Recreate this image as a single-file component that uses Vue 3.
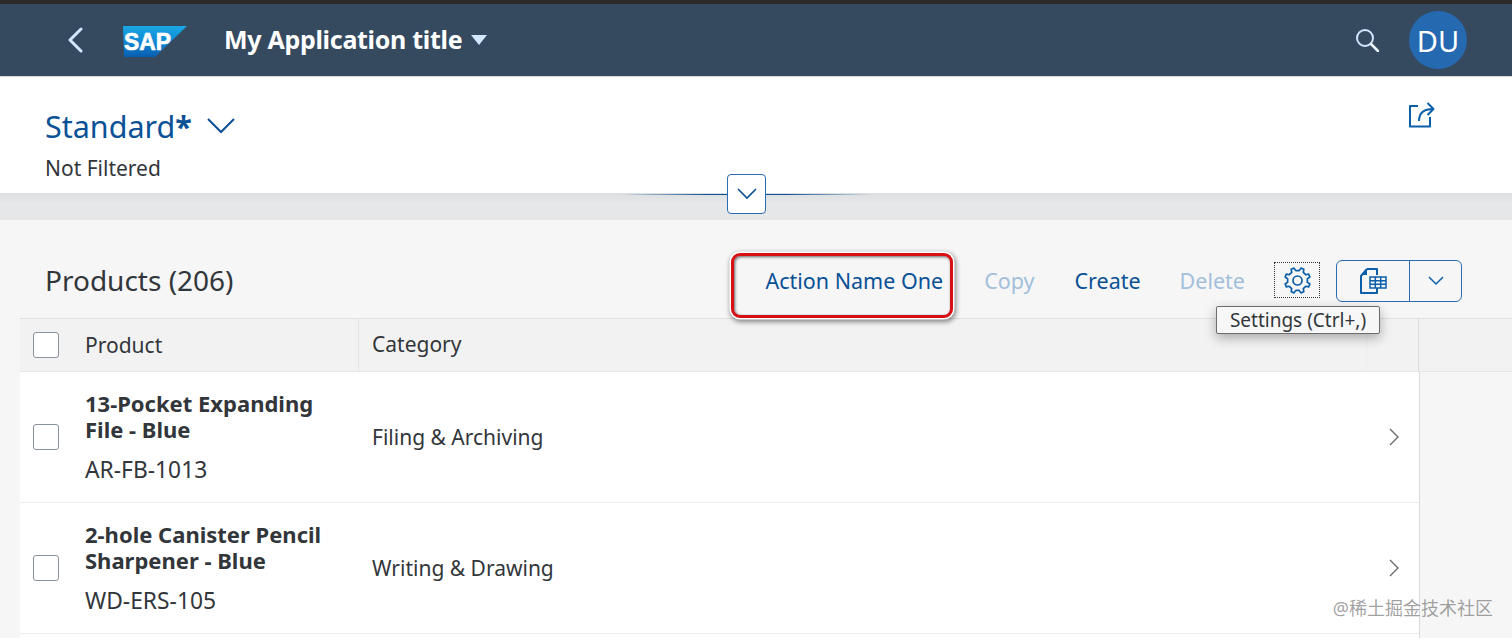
<script setup>
const products = [
    { name: "13-Pocket Expanding File - Blue", code: "AR-FB-1013", category: "Filing & Archiving" },
    { name: "2-hole Canister Pencil Sharpener - Blue", code: "WD-ERS-105", category: "Writing & Drawing" },
];

// outline of the settings gear, 8 teeth round the centre 12,12
function gearPath() {
    const pts = [];
    for (let i = 0; i < 8; i++) {
        const a = (i * Math.PI) / 4;
        [[-0.27, 11.4], [-0.17, 8.9], [0.17, 8.9], [0.27, 11.4]].forEach((p) => {
            pts.push((12 + p[1] * Math.cos(a + p[0])).toFixed(2) + " " + (12 + p[1] * Math.sin(a + p[0])).toFixed(2));
        });
    }
    return "M" + pts.join("L") + "Z";
}
const gear = gearPath();
</script>
<template>
    <div class="page">
        <div class="top_strip"></div>
        <header class="shell">
            <svg class="back" viewBox="0 0 16 26" width="16" height="26">
                <path d="M14 2 3 13l11 11" fill="none" stroke="#d1e8ff" stroke-width="3" stroke-linecap="round" stroke-linejoin="round" />
            </svg>
            <svg class="logo" viewBox="0 0 64 31" width="64" height="31">
                <defs>
                    <linearGradient id="sapBlue" x1="0" y1="0" x2="0" y2="1">
                        <stop offset="0" stop-color="#1aa7e6" />
                        <stop offset="0.55" stop-color="#0f86d2" />
                        <stop offset="1" stop-color="#0a5db0" />
                    </linearGradient>
                </defs>
                <polygon points="0,0 64,0 32,31 1,31" fill="url(#sapBlue)" />
                <text x="1" y="24" class="logo_text" textLength="47" lengthAdjust="spacingAndGlyphs">SAP</text>
            </svg>
            <span class="app_title">My Application title</span>
            <svg class="title_arrow" viewBox="0 0 16 10" width="16" height="10">
                <polygon points="0,0 16,0 8,10" fill="#d1e8ff" />
            </svg>
            <svg class="search" viewBox="0 0 24 24" width="24" height="24">
                <circle cx="10" cy="10" r="8" fill="none" stroke="#d1e8ff" stroke-width="2" />
                <path d="M16 16l7 7" stroke="#e8f3ff" stroke-width="2.6" stroke-linecap="round" />
            </svg>
            <div class="avatar">DU</div>
        </header>
        <section class="filter_bar">
            <div class="filter_text">
                <div class="variant">
                    <span>Standard<b>*</b></span>
                    <svg viewBox="0 0 28 16" width="28" height="16">
                        <path d="M1 1l13 13L27 1" fill="none" stroke="#0a4f94" stroke-width="2" />
                    </svg>
                </div>
                <div class="not_filtered">Not Filtered</div>
            </div>
            <svg class="share" viewBox="0 0 27 26" width="27" height="26">
                <path d="M10 4H2v20.500h20V15" fill="none" stroke="#0a5fa8" stroke-width="2" stroke-linejoin="round" />
                <path d="M11 19c0-8 4-12 14-12M19.500 1l6 6-6 6" fill="none" stroke="#0a5fa8" stroke-width="2" stroke-linejoin="round" />
            </svg>
        </section>
        <div class="band">
            <div class="band_line"></div>
            <button class="collapse">
                <svg viewBox="0 0 20 12" width="20" height="12">
                    <path d="M1 1l9 9 9-9" fill="none" stroke="#0a4f94" stroke-width="1.600" />
                </svg>
            </button>
        </div>
        <main class="content">
            <div class="toolbar">
                <div class="products_title">Products (206)</div>
                <div class="actions">
                    <div class="action_marked"><span>Action Name One</span></div>
                    <span class="action action_off copy">Copy</span>
                    <span class="action create">Create</span>
                    <span class="action action_off delete">Delete</span>
                    <div class="gear_box">
                        <svg viewBox="0 0 24 24" width="27" height="27">
                            <path :d="gear" fill="none" stroke="#0a5fa8" stroke-width="1.500" stroke-linejoin="round" />
                            <circle cx="12" cy="12" r="4" fill="none" stroke="#0a5fa8" stroke-width="1.500" />
                        </svg>
                        <div class="tooltip">Settings (Ctrl+,)</div>
                    </div>
                    <div class="view_button">
                        <div class="view_main">
                            <svg viewBox="0 0 28 26" width="28" height="26">
                                <path d="M8 1h10v6M18 20v5H2V8l6-7" fill="none" stroke="#0a5fa8" stroke-width="2" stroke-linejoin="round" />
                                <polygon points="2,7 8,1 8,7" fill="#0a5fa8" />
                                <rect x="11" y="9" width="16" height="11" fill="#f6f6f6" stroke="#0a5fa8" stroke-width="1.500" />
                                <path d="M11 12.700h16M11 16.300h16M16.300 9v11M21.700 9v11" stroke="#0a5fa8" stroke-width="1.500" />
                            </svg>
                        </div>
                        <div class="view_arrow">
                            <svg viewBox="0 0 16 10" width="16" height="10">
                                <path d="M1 1l7 7 7-7" fill="none" stroke="#0a5fa8" stroke-width="1.500" />
                            </svg>
                        </div>
                    </div>
                </div>
            </div>
            <div class="table_head">
                <div class="cell_check"><span class="checkbox"></span></div>
                <div class="cell_product">Product</div>
                <div class="cell_category">Category</div>
                <div class="cell_last"></div>
                <div class="cell_rest"></div>
            </div>
            <div class="rows">
                <div v-for="item in products" :key="item.code" class="row">
                    <div class="cell_check"><span class="checkbox"></span></div>
                    <div class="cell_product">
                        <div class="product_name">{{ item.name }}</div>
                        <div class="product_code">{{ item.code }}</div>
                    </div>
                    <div class="cell_category">{{ item.category }}</div>
                    <svg class="row_arrow" viewBox="0 0 10 18" width="10" height="18">
                        <path d="M1 1l8 8-8 8" fill="none" stroke="#6a6d70" stroke-width="1.400" />
                    </svg>
                </div>
                <div class="row_end"></div>
            </div>
        </main>
        <div class="watermark">@稀土掘金技术社区</div>
    </div>
</template>
<style scoped>
.page {
    position: relative;
    height: 638px;
    overflow: hidden;
    font-family: "Noto Sans", "Noto Sans CJK SC", sans-serif;
    color: #32363a;
    background: #f6f6f6;
}

.top_strip {
    height: 4px;
    background: #2b2b2b;
}

.shell {
    height: 72px;
    display: flex;
    align-items: center;
    background: #354a5f;
    border-bottom: 1px solid #d9d9d9;
    padding-left: 67px;
    padding-right: 45px;
    box-sizing: content-box;
}
.back {
    margin-right: 40px;
}
.logo {
    margin-right: 37px;
    margin-top: 3px;
}
.logo_text {
    font-family: "Liberation Sans", sans-serif;
    font-weight: 700;
    font-size: 24px;
    fill: #fff;
    stroke: #fff;
    stroke-width: 0.7px;
}
.app_title {
    font-size: 25px;
    line-height: 34px;
    margin-bottom: 2px;
    font-weight: 700;
    color: #fff;
    letter-spacing: -0.3px;
    margin-right: 9px;
}
.search {
    margin-left: auto;
    margin-right: 30px;
}
.avatar {
    width: 58px;
    height: 58px;
    border-radius: 50%;
    background: #2569b1;
    color: #fff;
    font-size: 29px;
    display: flex;
    align-items: center;
    justify-content: center;
}

.filter_bar {
    height: 116px;
    background: #fff;
    display: flex;
    justify-content: space-between;
    padding: 26px 77px 0 45px;
    box-sizing: border-box;
}
.variant {
    display: flex;
    align-items: center;
    gap: 15px;
    font-size: 30.500px;
    line-height: 46px;
    color: #0a5196;
}
.not_filtered {
    font-size: 21px;
    line-height: 32px;
    margin-top: 3px;
}
.share {
    margin-top: -1px;
}

.band {
    position: relative;
    height: 27px;
    background: linear-gradient(#dcdee0, #e6e8e9 40%, #e4e6e7);
}
.band_line {
    position: absolute;
    top: 1px;
    left: 620px;
    width: 252px;
    height: 1px;
    background: linear-gradient(90deg, transparent, #0a5196 35%, #0a5196 65%, transparent);
}
.collapse {
    position: absolute;
    top: -19px;
    left: 727px;
    width: 39px;
    height: 40px;
    border: 1px solid #2b6cb0;
    border-radius: 4px;
    background: #fff;
    display: flex;
    align-items: center;
    justify-content: center;
    padding: 0;
}

.toolbar {
    height: 98px;
    display: flex;
    align-items: center;
    justify-content: space-between;
    padding: 22px 50px 0 45px;
    box-sizing: border-box;
}
.products_title {
    font-size: 28px;
}
.actions {
    display: flex;
    align-items: center;
    font-size: 21.500px;
    color: #0a5196;
}
.action_marked {
    width: 222px;
    height: 65px;
    margin-top: 10px;
    box-sizing: border-box;
    border: 3px solid #d90f16;
    border-radius: 9px;
    box-shadow: 0 0 0 1.500px #fff, 1px 2px 5px 2px rgba(0, 0, 0, 0.45), inset 1px 1px 3px rgba(0, 0, 0, 0.6);
    display: flex;
    align-items: center;
    justify-content: flex-end;
    padding: 0 7px 10px 0;
}
.action_off {
    color: #a3bfdb;
}
.copy {
    margin-left: 31px;
}
.create {
    margin-left: 40px;
}
.delete {
    margin-left: 39px;
}
.gear_box {
    position: relative;
    width: 46px;
    height: 36px;
    margin-left: 29px;
    box-sizing: border-box;
    border: 1px dotted #32363a;
    display: flex;
    align-items: center;
    justify-content: center;
}
.tooltip {
    position: absolute;
    z-index: 2;
    top: 43px;
    left: -59px;
    width: 164px;
    height: 28px;
    box-sizing: border-box;
    background: #f7f7f7;
    border: 1px solid #6a6d70;
    border-radius: 2px;
    box-shadow: 0 4px 12px rgba(0, 0, 0, 0.3);
    color: #32363a;
    font-size: 19px;
    line-height: 27px;
    text-align: center;
    white-space: nowrap;
}
.view_button {
    width: 126px;
    height: 42px;
    margin-left: 16px;
    margin-top: 2px;
    box-sizing: border-box;
    border: 1.500px solid #2b6cb0;
    border-radius: 6px;
    display: flex;
}
.view_main {
    width: 72px;
    border-right: 1.500px solid #2b6cb0;
    display: flex;
    align-items: center;
    justify-content: center;
}
.view_arrow {
    flex: 1;
    display: flex;
    align-items: center;
    justify-content: center;
}

.table_head {
    height: 54px;
    margin-left: 20px;
    display: flex;
    align-items: center;
    background: #f2f2f2;
    border-top: 1px solid #e0e0e0;
    border-bottom: 1px solid #e5e5e5;
    box-sizing: border-box;
    font-size: 21px;
    line-height: 50px;
}
.cell_check {
    width: 65px;
    display: flex;
    padding-left: 13px;
    box-sizing: border-box;
    flex: none;
}
.checkbox {
    width: 26px;
    height: 26px;
    box-sizing: border-box;
    border: 1px solid #89919a;
    border-radius: 3px;
    background: #fff;
}
.cell_product {
    width: 273px;
    flex: none;
}
.table_head .cell_category {
    height: 100%;
    line-height: 50px;
    width: 1009px;
    border-left: 1px solid #e5e5e5;
    padding-left: 13px;
    box-sizing: border-box;
}
.cell_last {
    width: 52px;
    height: 100%;
    border-left: 1px solid #efefef;
    border-right: 1px solid #d9d9d9;
    box-sizing: border-box;
}
.cell_rest {
    width: 54px;
    height: 100%;
}

.rows {
    margin-left: 20px;
    width: 1400px;
    height: 266px;
    border-right: 1px solid #d9d9d9;
    box-sizing: border-box;
    background: #fff;
}
.row {
    height: 131px;
    display: flex;
    align-items: center;
    border-bottom: 1px solid #ececec;
    box-sizing: border-box;
}
.product_name {
    font-size: 22px;
    font-weight: 700;
    line-height: 26px;
    max-width: 250px;
}
.product_code {
    font-size: 22.800px;
    line-height: 28px;
    margin-top: 14px;
}
.row .cell_category {
    font-size: 21px;
    line-height: 28px;
    padding-left: 14px;
    flex: 1;
}
.row_arrow {
    margin-right: 20px;
}
.row_end {
    height: 4px;
}

.watermark {
    position: absolute;
    right: 19px;
    bottom: 18px;
    font-size: 18px;
    line-height: 24px;
    color: rgba(130, 130, 130, 0.75);
}
</style>
